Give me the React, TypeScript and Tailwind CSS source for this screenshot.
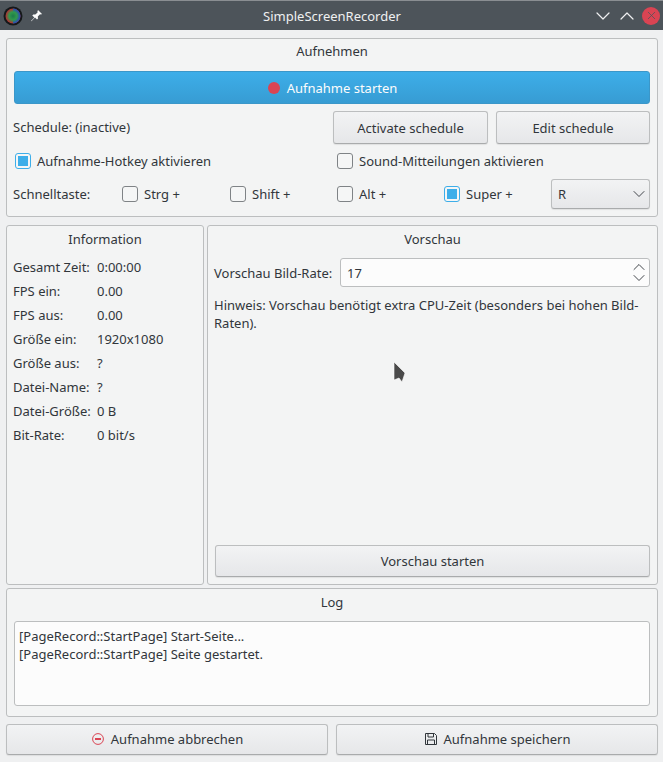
import { ChevronDown, ChevronUp, X } from "lucide-react";

const INFO_ROWS = [
  ["Gesamt Zeit:", "0:00:00"],
  ["FPS ein:", "0.00"],
  ["FPS aus:", "0.00"],
  ["Größe ein:", "1920x1080"],
  ["Größe aus:", "?"],
  ["Datei-Name:", "?"],
  ["Datei-Größe:", "0 B"],
  ["Bit-Rate:", "0 bit/s"],
];

const BUTTON =
  "flex items-center justify-center rounded-[3px] border border-[#bcbebf] border-b-[#a9abac] bg-gradient-to-b from-[#f2f3f4] to-[#e6e7e9] shadow-[0_1px_1px_rgba(0,0,0,0.08)]";
const GROUP = "rounded-[3px] border border-[#bcbebf] bg-[#f3f4f4]";

function Check({ label, checked, className }: { label: string; checked?: boolean; className?: string }) {
  return (
    <div className={`flex items-center ${className ?? ""}`}>
      <span
        className={`flex h-[16px] w-[16px] items-center justify-center rounded-[3px] border bg-[#f5f6f6] ${
          checked ? "border-[#3daee9]" : "border-[#7f8386]"
        }`}
      >
        {checked && <span className="h-[10px] w-[10px] bg-[#3daee9]" />}
      </span>
      <span className="ml-[6px]">{label}</span>
    </div>
  );
}

export default function App() {
  return (
    <div className="relative h-[762px] w-[663px] overflow-hidden bg-[#eff0f1] font-['Noto_Sans',sans-serif] text-[13px] leading-[18px] text-[#31363b]">
      {/* Title bar */}
      <div className="flex h-[30px] items-center border-t border-[#8a8e92] bg-[#4d545a] pl-[3px] pr-[3px] text-[#eff0f1]">
        <svg width="20" height="20" viewBox="0 0 20 20">
          <defs>
            <radialGradient id="lens" cx="0.5" cy="0.5" r="0.5">
              <stop offset="0" stopColor="#1f7a4a" />
              <stop offset="0.55" stopColor="#2f9a4c" />
              <stop offset="1" stopColor="#2f9a4c" stopOpacity="0" />
            </radialGradient>
          </defs>
          <circle cx="10" cy="10" r="9.5" fill="#15181a" />
          <circle cx="10" cy="10" r="7.5" fill="#a83a36" />
          <path d="M10 2.5a7.5 7.5 0 0 1 7.5 7.5A7.5 7.5 0 0 1 10 17.5z" fill="#2d4fb0" />
          <circle cx="10" cy="10" r="7" fill="url(#lens)" />
        </svg>
        <svg className="ml-[7px]" width="13" height="13" viewBox="0 0 13 13">
          <path d="M8 1l4 4-1 .6-1-.3-2.2 2.3.2 2-1 1-2-2-3.6 3.6L1 12l3.3-3.6-2-2 1-1 2 .2L7.6 3.4l-.2-1z" fill="#fcfcfc" />
        </svg>
        <div className="flex-1 pl-[30px] text-center">SimpleScreenRecorder</div>
        <ChevronDown size={24} strokeWidth={1.2} />
        <ChevronUp className="mr-[3px]" size={24} strokeWidth={1.2} />
        <span className="flex h-[18px] w-[18px] items-center justify-center rounded-full bg-[#da4453] text-[#4d545a]">
          <X size={13} strokeWidth={1.4} />
        </span>
      </div>

      <div className="flex flex-col pl-[6px] pr-[5px] pt-[8px]">
        {/* Aufnehmen */}
        <section className={`${GROUP} h-[179px] px-[7px]`}>
          <div className="pt-[3px] text-center">Aufnehmen</div>
          <div className="mt-[11px] flex h-[33px] items-center justify-center rounded-[3px] border border-[#3b97c9] bg-gradient-to-b from-[#3daee9] to-[#379cd3] pl-[1px] text-[#fcfcfc]">
            <span className="mr-[7px] h-[12px] w-[12px] rounded-full bg-[#da4453]" />
            Aufnahme starten
          </div>
          <div className="mt-[7px] flex items-center">
            <span className="-ml-[1px] flex-1 -translate-y-[1px]">Schedule: (inactive)</span>
            <div className={`${BUTTON} h-[33px] w-[155px]`}>Activate schedule</div>
            <div className={`${BUTTON} ml-[8px] h-[33px] w-[154px]`}>Edit schedule</div>
          </div>
          <div className="mt-[7px] flex h-[20px] items-center">
            <Check className="ml-[1px] w-[322px]" label="Aufnahme-Hotkey aktivieren" checked />
            <Check label="Sound-Mitteilungen aktivieren" />
          </div>
          <div className="mt-[8px] flex items-center">
            <span className="-ml-[1px] w-[109px]">Schnelltaste:</span>
            <Check className="w-[108px]" label="Strg +" />
            <Check className="w-[107px]" label="Shift +" />
            <Check className="w-[107px]" label="Alt +" />
            <Check className="w-[107px]" label="Super +" checked />
            <div className={`${BUTTON} h-[30px] w-[99px] !justify-between pl-[6px]`}>
              R
              <ChevronDown size={20} strokeWidth={1.1} />
            </div>
          </div>
        </section>

        <div className="mt-[8px] flex h-[360px] gap-[3px]">
          {/* Information */}
          <section className={`${GROUP} w-[198px] px-[6px]`}>
            <div className="pt-[4px] text-center">Information</div>
            <div className="mt-[10px] flex flex-col gap-[6px]">
              {INFO_ROWS.map(([label, value]) => (
                <div key={label} className="flex">
                  <span className="w-[84px]">{label}</span>
                  <span>{value}</span>
                </div>
              ))}
            </div>
          </section>

          {/* Vorschau */}
          <section className={`${GROUP} flex flex-1 flex-col px-[6px]`}>
            <div className="pt-[4px] text-center">Vorschau</div>
            <div className="mt-[10px] flex items-center">
              <span className="w-[126px]">Vorschau Bild-Rate:</span>
              <div className="flex h-[29px] w-[310px] items-center justify-between rounded-[3px] border border-[#bcbebf] bg-[#fcfcfc] pl-[6px]">
                17
                <span className="flex flex-col">
                  <ChevronUp className="-my-[4.5px]" size={20} strokeWidth={1.1} />
                  <ChevronDown className="-my-[4.5px]" size={20} strokeWidth={1.1} />
                </span>
              </div>
            </div>
            <p className="mt-[9px] w-[425px]">
              Hinweis: Vorschau benötigt extra CPU-Zeit (besonders bei hohen Bild-Raten).
            </p>
            <div className={`${BUTTON} mb-[7px] ml-[1px] mt-auto h-[32px] w-[435px]`}>Vorschau starten</div>
          </section>
        </div>

        {/* Log */}
        <section className={`${GROUP} mt-[3px] h-[129px] px-[7px]`}>
          <div className="pt-[4px] text-center">Log</div>
          <div className="mt-[10px] h-[85px] rounded-[3px] border border-[#bcbebf] bg-[#fcfcfc] px-[4px] pt-[5px]">
            <div>[PageRecord::StartPage] Start-Seite...</div>
            <div>[PageRecord::StartPage] Seite gestartet.</div>
          </div>
        </section>

        <div className="mt-[7px] flex gap-[8px]">
          <div className={`${BUTTON} h-[31px] w-[322px] pb-[2px] pl-[1px]`}>
            <svg className="mr-[7px]" width="12" height="12" viewBox="0 0 12 12" fill="none">
              <circle cx="6" cy="6" r="5.4" stroke="#da4453" />
              <path d="M3 6h6" stroke="#da4453" strokeWidth="2" />
            </svg>
            Aufnahme abbrechen
          </div>
          <div className={`${BUTTON} h-[31px] w-[322px] pb-[2px] pl-[1px]`}>
            <svg className="mr-[7px]" width="12" height="12" viewBox="0 0 12 12" fill="none" stroke="#31363b">
              <path d="M.5.5h9l2 2v9H.5z" />
              <path d="M3 .5v3.5h5.5V.5M2.5 11.5V7h7v4.5" />
            </svg>
            Aufnahme speichern
          </div>
        </div>
      </div>

      {/* Mouse pointer */}
      <svg className="absolute left-[393px] top-[361px]" width="14" height="22" viewBox="0 0 14 22">
        <path d="M1 1L12 12L9 21L6 17L1 19z" fill="#4a4a4a" stroke="#ffffff" strokeWidth="0.6" />
      </svg>
    </div>
  );
}
